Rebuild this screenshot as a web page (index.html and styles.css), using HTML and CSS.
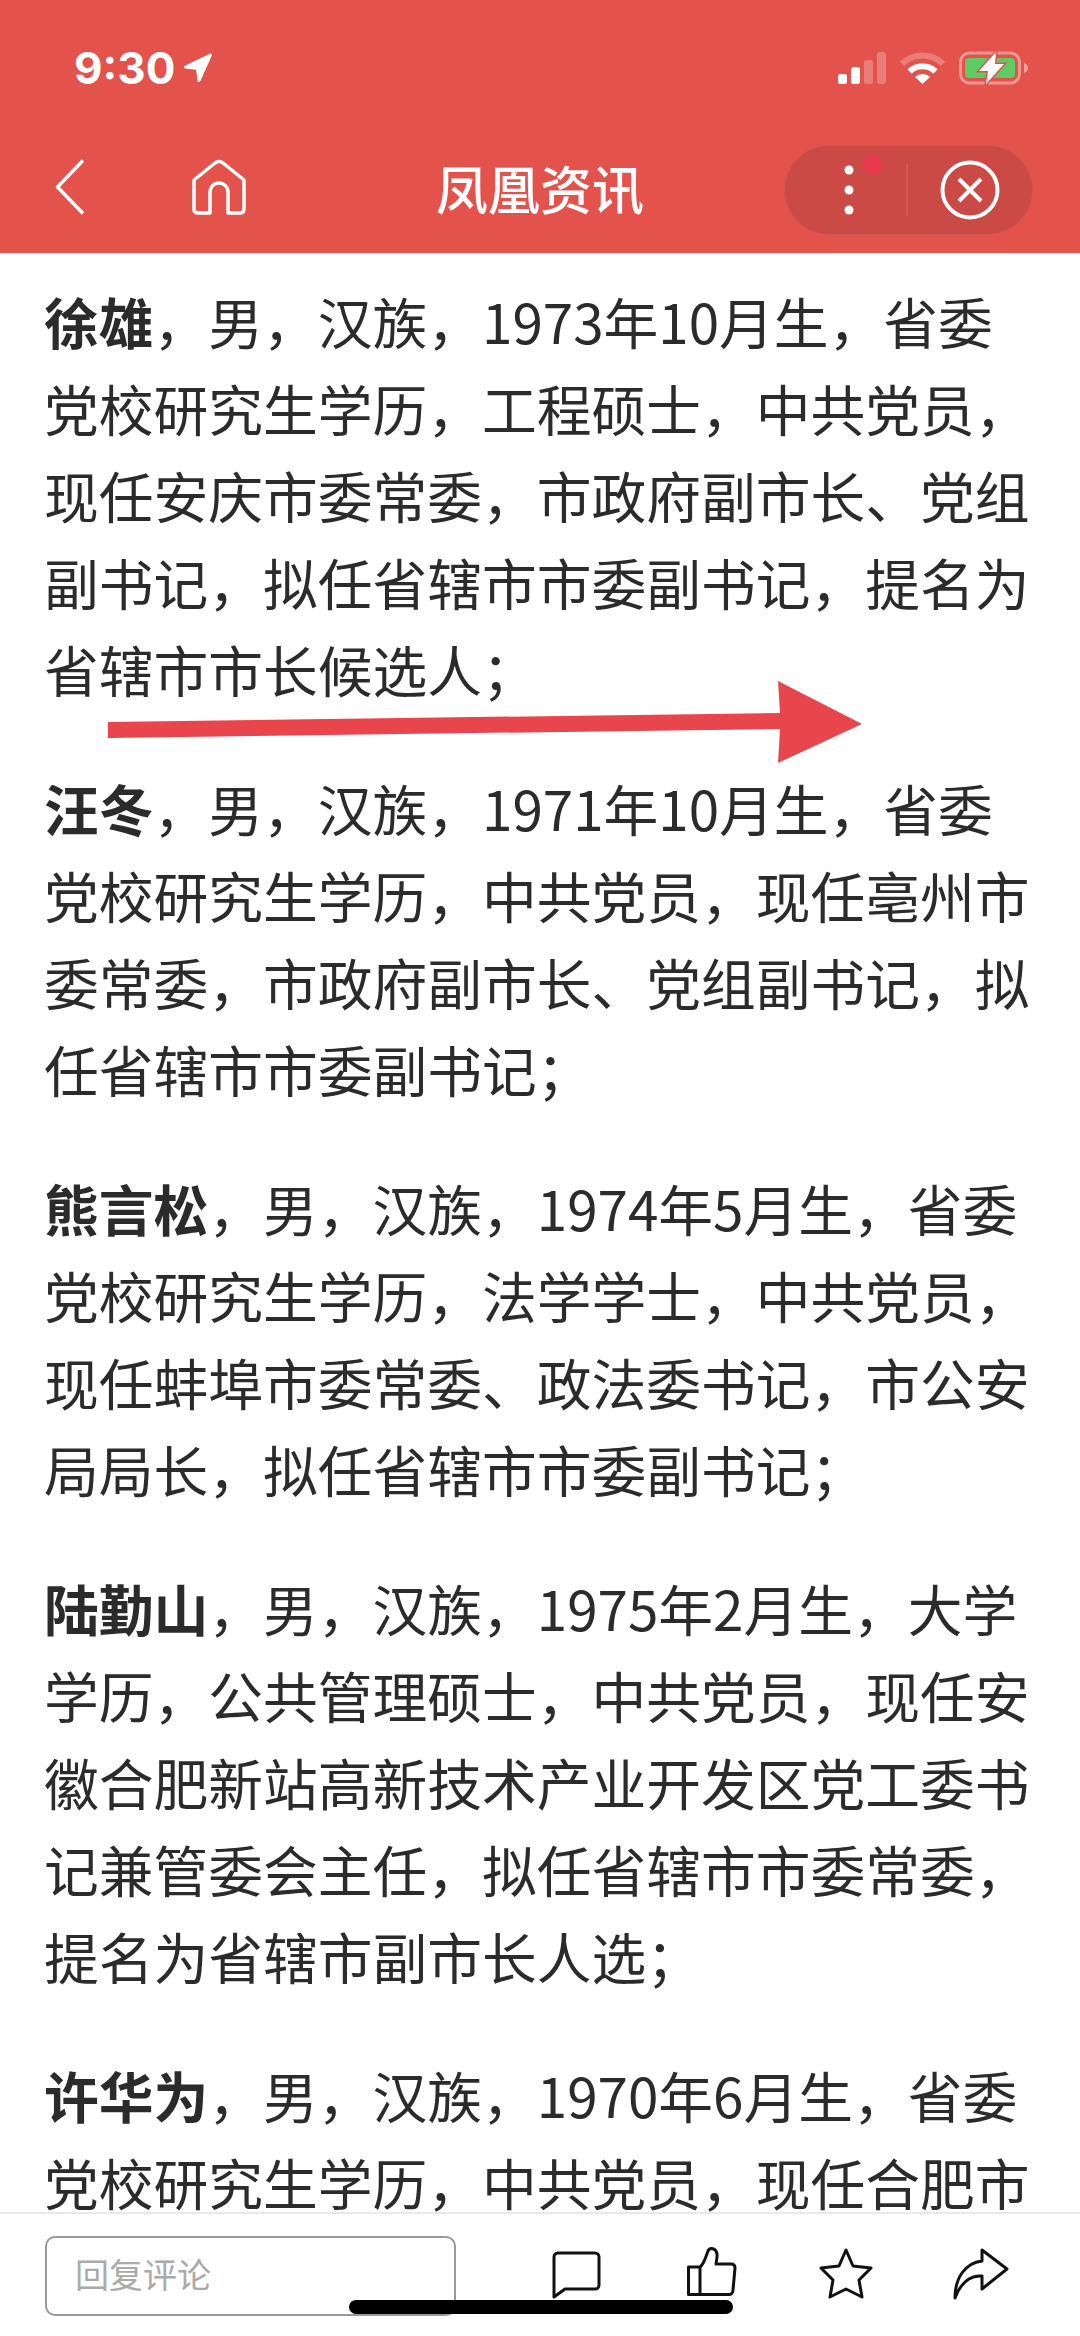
FILE: index.html
```html
<!doctype html>
<html>
  <head>
    <meta charset="utf-8">
    <title>凤凰资讯</title>
    <link rel="stylesheet" href="styles.css">
  </head>
  <body>
    <div id="app">
      <header id="app-header">
        <div class="status-bar">
          <div class="status-time">
            <span>9:30</span>
            <svg class="location" width="30" height="30" viewBox="0 0 30 30"><path d="M27.5 2 L2.5 14 L14.5 15.5 L16 27.5 Z" fill="#fff" stroke="#fff" stroke-width="3" stroke-linejoin="round"/></svg>
          </div>
          <div class="status-icons">
            <svg width="48" height="32" viewBox="0 0 48 32">
              <rect x="0" y="22" width="9" height="10" rx="2.5" fill="#fff"/>
              <rect x="13" y="15" width="9" height="17" rx="2.5" fill="#fff"/>
              <rect x="26" y="8" width="9" height="24" rx="2.5" fill="#fff" opacity=".25"/>
              <rect x="39" y="0" width="9" height="32" rx="2.5" fill="#fff" opacity=".25"/>
            </svg>
            <svg width="45" height="32" viewBox="0 0 45 32">
              <path d="M2 12 A29 29 0 0 1 43 12" fill="none" stroke="#fff" stroke-width="6" opacity=".25"/>
              <path d="M9.5 19.5 A18.5 18.5 0 0 1 35.5 19.5" fill="none" stroke="#fff" stroke-width="6"/>
              <path d="M22.5 32 L15 25 A11 11 0 0 1 30 25 Z" fill="#fff"/>
            </svg>
            <svg width="70" height="34" viewBox="0 0 70 34">
              <rect x="1.5" y="2" width="59" height="30" rx="9" fill="none" stroke="#fff" stroke-width="3" opacity=".4"/>
              <rect x="6" y="7" width="50" height="20" rx="4" fill="#5fcb65"/>
              <path d="M65 12 C68 13 69 15 69 17 C69 19 68 21 65 22 Z" fill="#fff" opacity=".45"/>
              <path d="M37 1 L20 20 H29 L27 33 L45 13 H36 Z" fill="#fff" stroke="#e4524c" stroke-width="3" paint-order="stroke"/>
            </svg>
          </div>
        </div>
        <nav class="nav-bar">
          <div class="nav-left">
            <svg width="30" height="56" viewBox="0 0 30 56"><path d="M28 1.5 L2.5 28 L28 54.5" fill="none" stroke="#fff" stroke-width="3.5" stroke-linejoin="round"/></svg>
            <svg width="56" height="56" viewBox="0 0 56 56"><path d="M3 21 L24 4 Q28 1 32 4 L53 21 V50 Q53 54 49 54 H37 V33 A9 9 0 0 0 19 33 V54 H7 Q3 54 3 50 Z" fill="none" stroke="#fff" stroke-width="3.5" stroke-linejoin="round"/></svg>
          </div>
          <h1 class="nav-title">凤凰资讯</h1>
          <div class="capsule">
            <div class="capsule-more">
              <svg width="10" height="50" viewBox="0 0 10 50"><circle cx="5" cy="5" r="4.5" fill="#fff"/><circle cx="5" cy="25" r="4.5" fill="#fff"/><circle cx="5" cy="45" r="4.5" fill="#fff"/></svg>
              <span class="capsule-dot"></span>
            </div>
            <div class="capsule-close">
              <svg width="60" height="60" viewBox="0 0 60 60"><circle cx="30" cy="30" r="27.5" fill="none" stroke="#fff" stroke-width="4"/><path d="M19 19 L41 41 M41 19 L19 41" stroke="#fff" stroke-width="4"/></svg>
            </div>
          </div>
        </nav>
      </header>

      <main id="article">
        <p><strong>徐雄</strong>，男，汉族，1973年10月生，省委党校研究生学历，工程硕士，中共党员，现任安庆市委常委，市政府副市长、党组副书记，拟任省辖市市委副书记，提名为省辖市市长候选人；</p>
        <p><strong>汪冬</strong>，男，汉族，1971年10月生，省委党校研究生学历，中共党员，现任亳州市委常委，市政府副市长、党组副书记，拟任省辖市市委副书记；</p>
        <p><strong>熊言松</strong>，男，汉族，1974年5月生，省委党校研究生学历，法学学士，中共党员，现任蚌埠市委常委、政法委书记，市公安局局长，拟任省辖市市委副书记；</p>
        <p><strong>陆勤山</strong>，男，汉族，1975年2月生，大学学历，公共管理硕士，中共党员，现任安徽合肥新站高新技术产业开发区党工委书记兼管委会主任，拟任省辖市市委常委，提名为省辖市副市长人选；</p>
        <p><strong>许华为</strong>，男，汉族，1970年6月生，省委党校研究生学历，中共党员，现任合肥市委常委；</p>
      </main>

      <footer id="app-footer">
        <div class="reply-box">回复评论</div>
        <div class="actions">
          <svg width="56" height="56" viewBox="0 0 56 56"><path d="M10 7 H47 A4 4 0 0 1 51 11 V39 A4 4 0 0 1 47 43 H17 L6 51 V11 A4 4 0 0 1 10 7 Z" fill="none" stroke="#111" stroke-width="3" stroke-linejoin="round"/></svg>
          <svg width="56" height="56" viewBox="0 0 56 56"><path d="M5.5 21 H17 V48.5 H5.5 Z M17 21 C21 18 23 10 25 5 C27 1 33 2 34 8 C34.500 12 33 16 33 18 H48 C51 18 52 20 52 22 L50 44 C50 47 48 48.500 46 48.500 H17" fill="none" stroke="#111" stroke-width="3" stroke-linejoin="round"/></svg>
          <svg width="56" height="56" viewBox="0 0 56 56"><path d="M28 4 L35 20 L53 22 L41 34 L44 51 L28 43 L12 51 L15 34 L3 22 L21 20 Z" fill="none" stroke="#111" stroke-width="3" stroke-linejoin="round"/></svg>
          <svg width="56" height="56" viewBox="0 0 56 56"><path d="M29 4 L54 23 L29 43 V30 C18 29 8 36 2 52 C2 32 12 17 29 15 Z" fill="none" stroke="#111" stroke-width="3" stroke-linejoin="round"/></svg>
        </div>
      </footer>

      <!-- drawn on top of the screenshot -->
      <svg class="markup-arrow" width="1080" height="120" viewBox="0 0 1080 120">
        <path d="M108 42 L780 33 L778 1 L862 44 L778 83 L780 49 L108 58 Z" fill="#e8464c"/>
      </svg>
      <div class="home-indicator"></div>
    </div>
  </body>
</html>
```

FILE: styles.css
```css
* {
  box-sizing: border-box;
}

html, body {
  background: #fff;
  height: 100%;
  margin: 0;
}

#app {
  display: flex;
  flex-direction: column;
  font-family: "Noto Sans CJK SC", sans-serif;
  height: 2336px;
  overflow: hidden;
  position: relative;
  width: 1080px;
}

#app-header {
  background: #e4524c;
  color: #fff;
  flex: 0 0 auto;
  height: 253px;
}

.status-bar {
  align-items: center;
  display: flex;
  height: 136px;
  justify-content: space-between;
  padding: 0 51px 0 74px;
}

.status-time {
  align-items: center;
  display: flex;
  font-family: Inter, sans-serif;
  font-size: 44px;
  font-weight: 700;
  gap: 8px;
}

.status-icons {
  align-items: center;
  display: flex;
  gap: 14px;
}

.nav-bar {
  align-items: center;
  display: grid;
  grid-template-columns: 1fr auto 1fr;
  height: 90px;
  margin-top: 9px;
  padding: 0 47px;
}

.nav-left {
  align-items: center;
  display: flex;
  gap: 106px;
  margin-left: 8px;
  padding-bottom: 6px;
}

.nav-title {
  font-size: 52px;
  font-weight: 500;
  margin: 0;
  padding-bottom: 5px;
}

.capsule {
  background: #cb4a45;
  border: 1px solid rgba(255, 255, 255, 0.07);
  border-radius: 45px;
  display: flex;
  height: 90px;
  justify-self: end;
  width: 249px;
}

.capsule-more {
  align-items: center;
  border-right: 2px solid rgba(255, 255, 255, 0.1);
  display: flex;
  height: 52px;
  justify-content: center;
  margin-top: 18px;
  padding-left: 6px;
  position: relative;
  width: 123px;
}

.capsule-dot {
  background: #e8394f;
  border-radius: 50%;
  height: 20px;
  left: 78px;
  position: absolute;
  top: -9px;
  width: 20px;
}

.capsule-close {
  align-items: center;
  display: flex;
  flex: 1;
  justify-content: center;
}

#article {
  color: #2b2b2b;
  flex: 1 1 auto;
  font-size: 54.75px;
  line-height: 87px;
  min-height: 0;
  overflow: hidden;
  padding: 24px 44px 0;
}

#article p {
  margin: 0 0 52px;
}

#article strong {
  font-weight: 700;
}

#app-footer {
  background: #fff;
  border-top: 2px solid #e9e9e9;
  display: flex;
  flex: 0 0 auto;
  height: 124px;
  padding: 22px 0 0 45px;
}

.reply-box {
  border: 2px solid #999;
  border-radius: 10px;
  color: #aaa;
  font-size: 34px;
  height: 80px;
  line-height: 72px;
  padding-left: 28px;
  width: 411px;
}

.actions {
  display: flex;
  gap: 79px;
  margin-left: 92px;
  margin-top: 10px;
}

.markup-arrow {
  left: 0;
  position: absolute;
  top: 680px;
}

.home-indicator {
  background: #000;
  border-radius: 7px;
  height: 14px;
  left: 349px;
  position: absolute;
  top: 2300px;
  width: 384px;
}
```
